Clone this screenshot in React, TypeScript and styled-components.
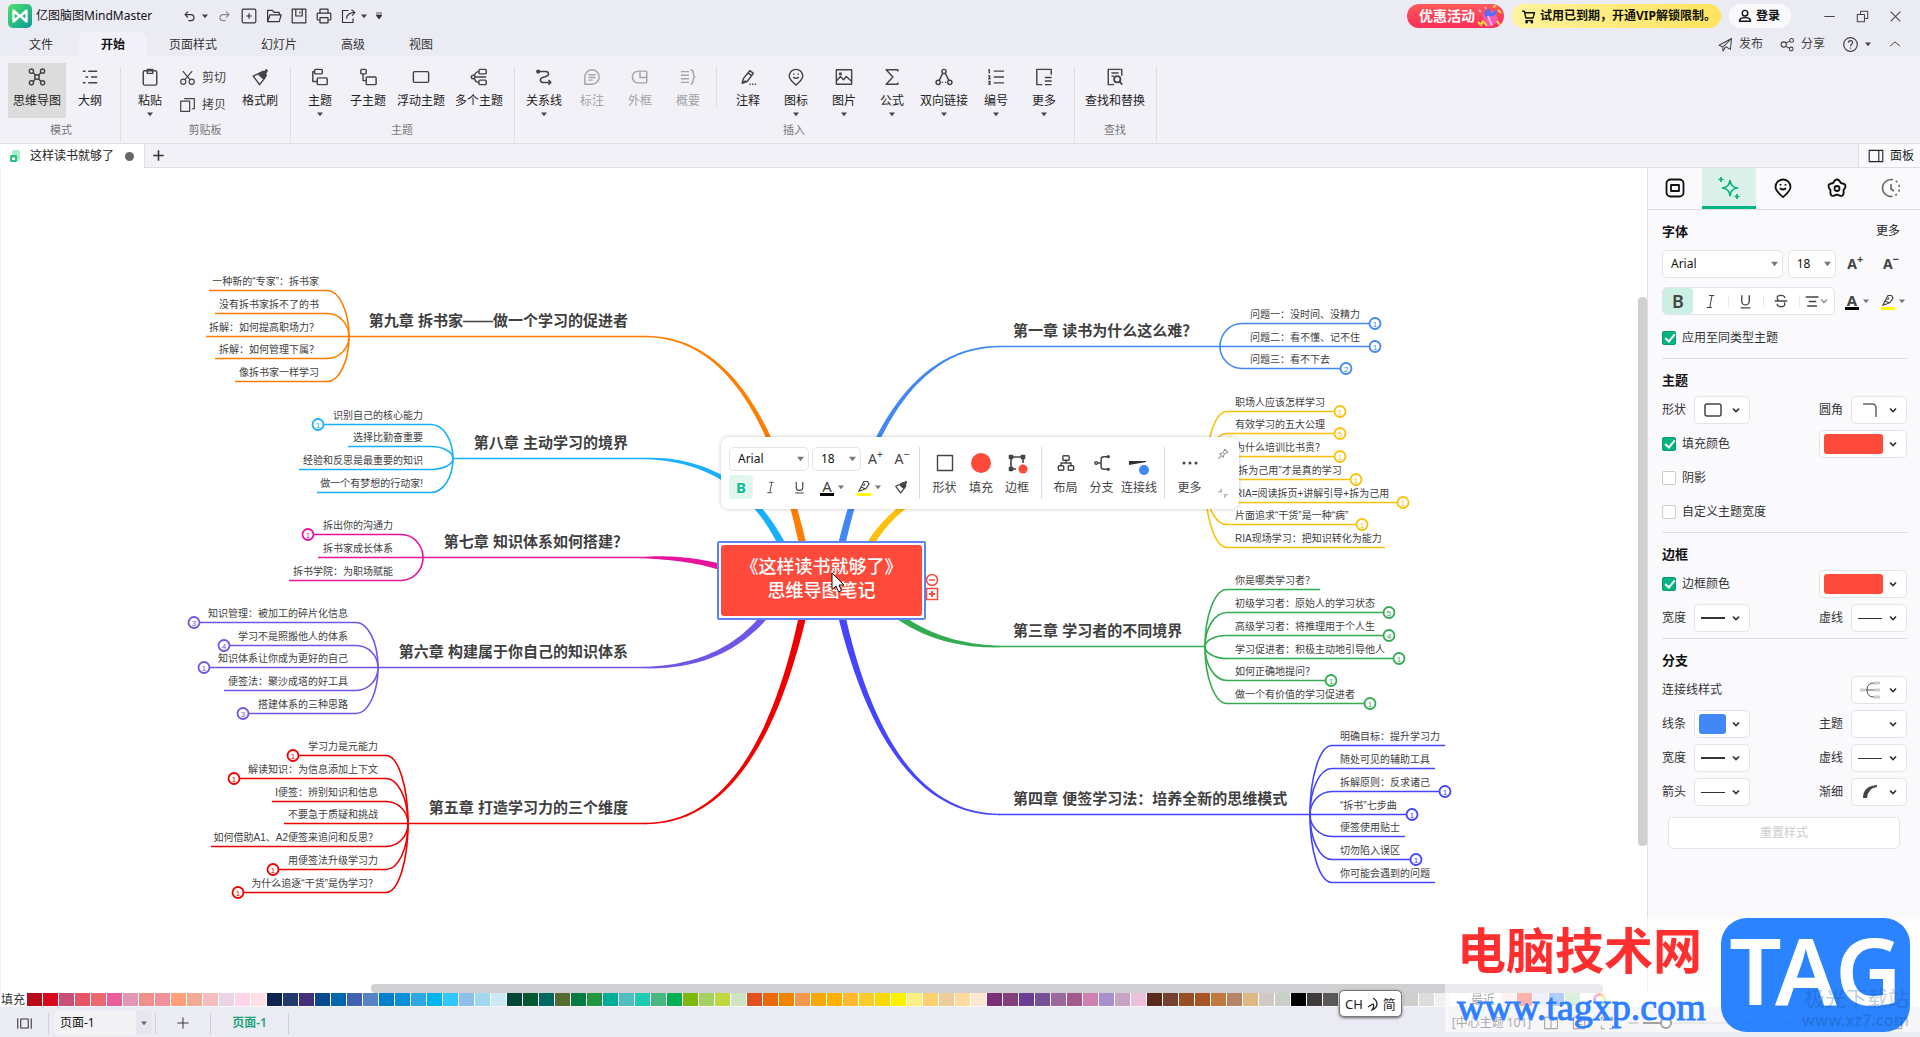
import React from 'react';
import styled, { createGlobalStyle, css } from 'styled-components';

const UI_FONT = `"Noto Sans", "Noto Sans CJK SC", sans-serif`;
const MAP_FONT = `"Liberation Sans", "Noto Sans CJK SC", sans-serif`;

const color = {
  chrome: '#ebebf4',
  ribbon: '#f2f1f7',
  line: '#dedee3',
  text: '#222',
  muted: '#777',
  green: '#00b582',
  red: '#fd4a3b',
  blue: '#4187f5',
};

const GlobalStyle = createGlobalStyle`
  * { box-sizing: border-box; }
  body { margin: 0; font: 12px/16px ${UI_FONT}; color: ${color.text}; overflow: hidden; }
  button, input, select { font: inherit; color: inherit; margin: 0; }
  button { background: none; border: 0; padding: 0; cursor: pointer; }
  svg { display: block; flex: none; }
  h2 { margin: 0; }
`;

/* ---------- icons ---------- */

const paths: Record<string, React.ReactNode> = {
  undo: <path d="M8 3.500 4 7.500l4 4M4.500 7.500H12a4 4 0 0 1 0 8H8.500" />,
  redo: <path d="m12 3.500 4 4-4 4M15.500 7.500H8a4 4 0 0 0 0 8h3.500" />,
  newDoc: <><rect x="1.500" y="1.500" width="17" height="17" rx="1.500" /><path d="M10 6.500v7M6.500 10h7" /></>,
  open: <path d="M2 17V3h6l2 2.500H16.500v3.500M2 17l3-8.500H19L16.500 17H2Z" />,
  save: <><path d="M1.500 1.500h17v17h-17z" /><path d="M6 1.500v8.500h8V1.500M11 4.500v2.500" /></>,
  print: <><path d="M5 6.500V1.500h10v5M5 15H2.500A1 1 0 0 1 1.500 14V7.500a1 1 0 0 1 1-1h15a1 1 0 0 1 1 1V14a1 1 0 0 1-1 1H15" /><path d="M5 12h10v6.500H5z" /></>,
  exportDoc: <path d="M10 2H2v16h14V12.500M7.500 13c0-5 3-8 10.500-8.500M14 1l4.500 3.500L15 9" />,
  mindmap: <><circle cx="10" cy="10" r="2.500" /><circle cx="3.800" cy="3.500" r="2.300" /><circle cx="16.200" cy="3.500" r="2.300" /><circle cx="3.800" cy="16.500" r="2.300" /><circle cx="16.200" cy="16.500" r="2.300" /><path d="m5.500 5 3 3M14.500 5l-3 3M5.500 15l3-3M14.500 15l-3-3" /></>,
  outline: <path d="M2 3.500h3M8 3.500h10M5 10h3M11 10h7M2 16.500h3M8 16.500h10" strokeWidth="1.700" />,
  paste: <><rect x="2.500" y="3" width="15" height="16" rx="1.500" /><path d="M7 1.500h6v4.500H7z" /></>,
  cut: <><circle cx="5" cy="15" r="3" /><circle cx="15" cy="15" r="3" /><path d="M4.500 2.500 13 12.500M15.500 2.500 7 12.500" /></>,
  copy: <><path d="M2 6h10.500v12H2z" /><path d="M6 3h12v12h-3" /></>,
  brush: <><path d="M2.500 9 11 5l4.500 6-6 7.500z" /><path d="m9 7.500 4-4 1.500 1.500 2.500-3 1 1-2 3.500 1 2-3.500 3z" fill="currentColor" /></>,
  topic: <><rect x="4" y="1.500" width="8.500" height="5" rx="1" /><rect x="7" y="11" width="11" height="7.500" rx="1" /><path d="M4 4H2v11h5" /></>,
  subTopic: <><rect x="2" y="1.500" width="6" height="5" rx="1" /><rect x="8" y="10" width="11" height="8.500" rx="1" /><path d="M4.500 6.500V14H8" /></>,
  floatTopic: <rect x="1.500" y="4" width="17" height="12" rx="1.500" />,
  multiTopic: <><circle cx="3.500" cy="10" r="2" /><rect x="10" y="1.500" width="8" height="5" rx="1" /><rect x="10" y="13.500" width="8" height="5" rx="1" /><path d="M10 4C7 4 5.500 6 5 8.500M10 16c-3 0-4.500-2-5-4.500M5.500 10H18" /></>,
  relation: <><circle cx="3.500" cy="4" r="1.500" fill="currentColor" /><path d="M5 4h7a3 3 0 0 1 3 3c0 4-9 2-9 6a3 3 0 0 0 3 3h8M15 13.500l2.500 2.500L15 18.500" strokeWidth="1.700" /></>,
  callout: <><path d="M2 18V10a8 8 0 1 1 8 8z" /><path d="M6 7.500h8M6 10.500h8M6 13.500h5" /></>,
  boundary: <><path d="M8 3.500h8.500a1 1 0 0 1 1 1v11a1 1 0 0 1-1 1H8a6.500 6.500 0 0 1 0-13Z" /><path d="M10 4v6.500h7.500" /></>,
  summary: <path d="M2 4h9M2 8h9M2 12h9M2 16h9M13 2c5 0 1.500 7 4.500 8-3 1-.500 8-4.500 8" />,
  note: <path d="M3.500 17 5 11.500 12 3l4 3-7 9zM10 5.500l4 3M3.500 17l4-3M11.500 18h1.500M14.500 18H16M17.500 18H19" />,
  marker: <><path d="M10 19C6 15.500 2.500 13 2.500 9a7.500 7.500 0 0 1 15 0c0 4-3.500 6.500-7.500 10Z" /><path d="M7.500 6v1.500M12.500 6v1.500M7 10c1.500 2 4.500 2 6 0" /></>,
  image: <><rect x="1.500" y="2" width="17" height="16" rx=".5" /><circle cx="6" cy="6.500" r="1" /><path d="m2 14 4-4.500 3.500 3.500 3-3.500 5.500 5" /></>,
  sigma: <path d="M16.500 4V2H3.500l7.500 8-7.500 8h13v-2" />,
  link: <><circle cx="10" cy="3.800" r="2.300" /><circle cx="3.500" cy="16" r="2.300" /><circle cx="16.500" cy="16" r="2.300" /><path d="M8.500 6 4.800 13.500M11.500 6l3.700 7.500M7.500 16h1.500M11 16h1.500" /></>,
  numbering: <path d="M7.500 3.500H19M7.500 10H19M7.500 16.500H19M1.500 2h1v4M1.500 9c2-1 2 0 .5 3h2M1.500 15h2l-1 1.500 1 1.500h-2" />,
  more: <path d="M18 7.500V1.500H2V18.500h6M11 10.500h7.500M11 14.500h7.500M11 18.500h7.500" />,
  find: <><path d="M9 18.500H2.500v-17h15v7M6 5.500h8M6 9h3" /><circle cx="12.500" cy="12.500" r="3.500" strokeWidth="2" /><path d="m15 15 3 3.500" strokeWidth="2" /></>,
  cart: <><path d="M1.500 3h3l2 9h9.500l2-7H5" /><path d="M6 15.500h10" /><circle cx="7.500" cy="17.500" r="1" /><circle cx="14.500" cy="17.500" r="1" /></>,
  user: <><circle cx="10" cy="6" r="4" /><path d="M2 17.500c0-7 16-7 16 0z" /></>,
  send: <path d="M18 2 1.500 11l5 2.500zM18 2l-1.500 14.500-6-3.500M18 2 6.500 13.500v5l4-5.500" />,
  share: <><circle cx="5" cy="10" r="3.500" /><circle cx="15.500" cy="4.500" r="2.500" /><circle cx="15" cy="16" r="2.500" /><path d="m8 8.500 5-3M7.500 12.500l5.500 2.500" /></>,
  help: <><circle cx="10" cy="10" r="8" /><path d="M7.500 8c0-3.500 5-3.500 5 0 0 2-2.500 1.500-2.500 4M10 13.500V15" /></>,
  up: <path d="m3 13 7-6 7 6" />,
  minimise: <path d="M2 10h16" />,
  restore: <><path d="M2 7h11v11H2z" /><path d="M7 7V2h11v11h-5" /></>,
  close: <path d="m2.500 2.500 15 15M17.500 2.500l-15 15" />,
  plus: <path d="M10 2v16M2 10h16" />,
  panel: <path d="M1.500 3h17v14h-17zM13.500 3v14" />,
  layoutTab: <><rect x="1.500" y="1.500" width="17" height="17" rx="4" /><rect x="6" y="7" width="8" height="6" /></>,
  sparkle: <><path d="M11 2.500c1 5 2.500 6.500 7.500 7.500-5 1-6.500 2.500-7.500 7.500-1-5-2.500-6.500-7.500-7.500 5-1 6.500-2.500 7.500-7.500Z" /><path d="M2-1v5M-.5 1.500h5M18 16v5M15.500 18.500h5" /></>,
  flower: <><path d="M10 1.500c2 0 3 1.800 3.800 3.500 2 .3 4.200.7 4.700 2.600.4 1.700-.8 3-2 4.400.2 2 .6 4.300-1 5.400-1.700 1.100-3.500.1-5.500-.9-2 1-3.800 2-5.500.9-1.600-1.100-1.200-3.400-1-5.400-1.200-1.400-2.400-2.700-2-4.400.5-1.900 2.700-2.300 4.700-2.600C7 3.300 8 1.500 10 1.500Z" /><circle cx="10" cy="10.500" r="2.500" /></>,
  history: <><path d="M10 1.500a8.500 8.500 0 0 0 0 17" /><path d="M10 1.500a8.500 8.500 0 0 1 0 17" strokeDasharray="2 3" /><path d="M10 6v5l3 2" /></>,
  italic: <path d="M8 2h7M5 18h7M12 2 9 18" />,
  underline: <path d="M5 1.500v8a5 5 0 0 0 10 0v-8M3.500 18.500h13" />,
  strike: <path d="M15.500 6c0-5.500-11-5.500-11-.5 0 1.500.5 2.500 2 3.500M4.500 14c0 5.500 11 5.500 11 .5 0-1-.5-2-1-2.500M1 10h18" />,
  align: <path d="M1 4h17M5 10h10M3 16h13" />,
  square: <rect x="2.500" y="2.500" width="15" height="15" />,
  frame: <><path d="M4 4h12v6M4 4v12h5" /><path d="M2.500 2.500h3v3h-3zM14.500 2.500h3v3h-3zM2.500 14.500h3v3h-3z" fill="currentColor" /><circle cx="16" cy="16" r="4.500" fill={color.red} stroke="none" /></>,
  org: <><rect x="6.500" y="2" width="7" height="5" rx="1" /><rect x="1.500" y="13" width="6" height="5" rx="1" /><rect x="12.500" y="13" width="6" height="5" rx="1" /><path d="M10 7v3M4.500 13v-3h11v3" /></>,
  branch: <><circle cx="3.500" cy="10" r="1.500" /><path d="M5 10h4M18 3h-6c-2 0-3 1-3 3v8c0 2 1 3 3 3h6" /><circle cx="17" cy="3" r="1" /><circle cx="17" cy="17" r="1" /></>,
  pin: <path d="m2 18 5-5M4 9l7 7M5.500 9.500 10 8l3-6 5 5-6 3-1.500 5" />,
  collapse: <path d="M2 8h5V3M13 18v-5h5" />,
  fitBox: <path d="M1 3v14M19 3v14M5 4h10v12H5z" />,
  book: <path d="M2 3h6l2 2 2-2h6v14H2zM10 5v12" />,
  grid: <path d="M3 3h14v14H3zM6 8h8M6 12h8" />,
  full: <path d="M7 3H3v4M13 3h4v4M7 17H3v-4M13 17h4v-4" />,
};

const Glyph = ({ name, size = 20, weight = 1.4 }: { name: string; size?: number; weight?: number }) => (
  <svg width={size} height={size} viewBox="0 0 20 20" fill="none" stroke="currentColor" strokeWidth={weight} strokeLinejoin="round" overflow="visible" aria-hidden="true">
    {paths[name]}
  </svg>
);

const Caret = ({ size = 6, fill = '#444' }: { size?: number; fill?: string }) => (
  <svg width={size} height={size} viewBox="0 0 8 8" aria-hidden="true"><path d="M0 2h8L4 7z" fill={fill} /></svg>
);

const Chevron = ({ tone = '#333' }: { tone?: string }) => (
  <svg width="8" height="8" viewBox="0 0 8 8" fill="none" stroke={tone} strokeWidth="1.700" aria-hidden="true"><path d="m1 2.500 3 3 3-3" /></svg>
);

/* ---------- window chrome ---------- */

const Shell = styled.div`
  position: relative;
  display: flex;
  flex-direction: column;
  height: 100vh;
  background: ${color.chrome};
`;

const TitleBar = styled.header`
  display: flex;
  align-items: center;
  justify-content: space-between;
  height: 32px;
  padding: 0 18px 0 8px;
`;

const Cluster = styled.div<{ $gap?: number }>`
  display: flex;
  align-items: center;
  gap: ${p => p.$gap ?? 0}px;
`;

const AppName = styled.span`
  margin: 0 26px 0 4px;
  width: 120px;
  color: #111;
  white-space: nowrap;
`;

const QuickButton = styled.button<{ $dim?: boolean }>`
  display: flex;
  align-items: center;
  gap: 5px;
  color: ${p => (p.$dim ? '#888' : '#333')};
`;

const Promo = styled.button`
  display: flex;
  align-items: center;
  width: 97px;
  height: 24px;
  padding-left: 12px;
  border-radius: 12px;
  background: linear-gradient(180deg, #ff5a5a, #fb2d57);
  color: #fff;
  font-size: 14px;
  font-weight: 700;
`;

const VipPill = styled.button`
  display: flex;
  align-items: center;
  gap: 4px;
  height: 24px;
  width: 209px;
  padding-left: 9px;
  border-radius: 12px;
  background: linear-gradient(90deg, #fff39c, #ffe35e);
  color: #111;
  font-weight: 700;
  white-space: nowrap;
`;

const LoginPill = styled(VipPill)`
  width: 62px;
  background: #fafafd;
`;

const WindowButtons = styled(Cluster)`
  margin-left: 24px;
  color: #444;
`;

const TabRow = styled.nav`
  display: flex;
  justify-content: space-between;
  height: 24px;
  padding: 0 18px 0 7px;
`;

const RibbonTab = styled.button<{ $active?: boolean }>`
  height: 24px;
  padding: 1px 22px 0;
  color: #333;
  &:first-child { margin-right: 4px; }
  ${p => p.$active && css`
    background: ${color.ribbon};
    border-radius: 6px 6px 0 0;
    color: #111;
    font-weight: 700;
  `}
`;

const LinkButton = styled.button`
  display: flex;
  align-items: center;
  gap: 6px;
  color: #444;
`;

/* ---------- ribbon ---------- */

const Ribbon = styled.section`
  display: flex;
  height: 88px;
  background: ${color.ribbon};
  border-bottom: 1px solid ${color.line};
`;

const Group = styled.div<{ $first?: boolean }>`
  position: relative;
  display: flex;
  flex-direction: column;
  padding: 7px 7px 0 ${p => (p.$first ? 8 : 5)}px;
  &::after {
    content: '';
    position: absolute;
    right: 0;
    top: 11px;
    bottom: 1px;
    width: 1px;
    background: ${color.line};
  }
`;

const Tools = styled.div`
  display: flex;
  height: 55px;
`;

const GroupLabel = styled.div`
  margin-top: 4px;
  font-size: 11px;
  text-align: center;
  color: ${color.muted};
`;

const Tool = styled.button<{ $w: number; $active?: boolean; $off?: boolean }>`
  display: flex;
  flex-direction: column;
  align-items: center;
  width: ${p => p.$w}px;
  padding-top: 5px;
  color: ${p => (p.$off ? '#a3a3a8' : '#444')};
  background: ${p => (p.$active ? '#dcdcdd' : 'none')};
  white-space: nowrap;
  span { margin: 7px 0 2px; color: ${p => (p.$off ? '#a3a3a8' : '#222')}; }
`;

const SmallTools = styled.div`
  display: flex;
  flex-direction: column;
  width: 62px;
  padding: 6px 0 0 5px;
  gap: 10px;
`;

const SmallTool = styled.button`
  display: flex;
  align-items: center;
  gap: 6px;
  height: 17px;
  color: #444;
`;

const ToolRule = styled.i`
  width: 1px;
  height: 42px;
  margin: 3px 7px 0 4px;
  background: ${color.line};
`;

type ToolSpec = { icon: string; label: string; w?: number; menu?: boolean; off?: boolean; active?: boolean };

const ToolButton = ({ icon, label, w = 48, menu, off, active }: ToolSpec) => (
  <Tool $w={w} $off={off} $active={active} disabled={off}>
    <Glyph name={icon} size={18} weight={1.6} />
    <span>{label}</span>
    {menu && <Caret size={6} fill="#445" />}
  </Tool>
);

const topicTools: ToolSpec[] = [
  { icon: 'topic', label: '主题', menu: true },
  { icon: 'subTopic', label: '子主题' },
  { icon: 'floatTopic', label: '浮动主题', w: 58 },
  { icon: 'multiTopic', label: '多个主题', w: 58 },
];
const relationTools: ToolSpec[] = [
  { icon: 'relation', label: '关系线', menu: true },
  { icon: 'callout', label: '标注', off: true },
  { icon: 'boundary', label: '外框', off: true },
  { icon: 'summary', label: '概要', off: true },
];
const insertTools: ToolSpec[] = [
  { icon: 'note', label: '注释' },
  { icon: 'marker', label: '图标', menu: true },
  { icon: 'image', label: '图片', menu: true },
  { icon: 'sigma', label: '公式', menu: true },
  { icon: 'link', label: '双向链接', w: 56, menu: true },
  { icon: 'numbering', label: '编号', menu: true },
  { icon: 'more', label: '更多', menu: true },
];

/* ---------- document tabs ---------- */

const DocBar = styled.div`
  display: flex;
  height: 24px;
  background: ${color.ribbon};
  border-bottom: 1px solid ${color.line};
`;

const DocTab = styled.div`
  display: flex;
  align-items: center;
  width: 145px;
  height: 24px;
  padding-left: 9px;
  background: #fff;
  border-right: 1px solid ${color.line};
  span { width: 84px; margin: 0 11px 0 9px; }
`;

const Dot = styled.i`
  width: 9px;
  height: 9px;
  border-radius: 50%;
  background: #666;
`;

const AddDoc = styled.button`
  display: grid;
  place-items: center;
  width: 26px;
  color: #333;
`;

const PanelToggle = styled.button`
  display: flex;
  align-items: center;
  gap: 6px;
  width: 62px;
  margin-left: auto;
  padding-left: 9px;
  background: #fafafd;
  border-left: 1px solid ${color.line};
`;

/* ---------- canvas ---------- */

const Main = styled.main`
  display: flex;
  flex: 1;
  min-height: 0;
`;

const Canvas = styled.section`
  position: relative;
  flex: 1;
  overflow: hidden;
  background: #fff;
  border-left: 1px solid #f0f0f5;
`;

const MAP_W = 1646;
const MAP_H = 825;
const MAP_TOP = 168;

const MapLayer = styled.div`
  position: absolute;
  left: -1px;
  top: 0;
  width: ${MAP_W}px;
  height: ${MAP_H}px;
  font-family: ${MAP_FONT};
`;

const Lines = styled.svg`
  position: absolute;
  inset: 0;
`;

const NodeText = styled.div<{ $side: Side; $x: number; $y: number; $title?: boolean }>`
  position: absolute;
  top: ${p => p.$y - MAP_TOP}px;
  ${p => (p.$side === 'left' ? `right: ${MAP_W - p.$x}px` : `left: ${p.$x}px`)};
  font-size: ${p => (p.$title ? 15 : 10)}px;
  line-height: ${p => (p.$title ? 20 : 14)}px;
  font-weight: ${p => (p.$title ? 700 : 400)};
  color: #404040;
  white-space: nowrap;
`;

type Side = 'left' | 'right';
type Leaf = [text: string, y: number, end: number, badge?: number];
type Branch = {
  side: Side;
  tone: string;
  title?: string;
  y: number;
  spine: number;
  control: number;
  root: [number, number];
  power: number;
  leaves: Leaf[];
};

const branches: Branch[] = [
  { side: 'left', tone: '#ff7d00', title: '第九章 拆书家——做一个学习的促进者', y: 336, spine: 349, control: 765, root: [810, 580], power: 1.5,
    leaves: [['一种新的“专家”：拆书家', 290, 209], ['没有拆书家拆不了的书', 313, 215], ['拆解：如何提高职场力？', 336, 206], ['拆解：如何管理下属？', 358, 215], ['像拆书家一样学习', 381, 235]] },
  { side: 'left', tone: '#1ab0ff', title: '第八章 主动学习的境界', y: 458, spine: 453, control: 755, root: [797, 580], power: 0.8,
    leaves: [['识别自己的核心能力', 424, 318, 1], ['选择比勤奋重要', 446, 348], ['经验和反思是最重要的知识', 469, 299], ['做一个有梦想的行动家!', 492, 317]] },
  { side: 'left', tone: '#e8139b', title: '第七章 知识体系如何搭建？', y: 557, spine: 423, control: 722, root: [765, 588], power: 0.6,
    leaves: [['拆出你的沟通力', 534, 308, 1], ['拆书家成长体系', 557, 318], ['拆书学院：为职场赋能', 580, 289]] },
  { side: 'left', tone: '#6e57e8', title: '第六章 构建属于你自己的知识体系', y: 667, spine: 378, control: 745, root: [788, 580], power: 0.8,
    leaves: [['知识管理：被加工的碎片化信息', 622, 194, 3], ['学习不是照搬他人的体系', 645, 224, 4], ['知识体系让你成为更好的自己', 667, 204, 1], ['便签法：聚沙成塔的好工具', 690, 224], ['搭建体系的三种思路', 713, 243, 3]] },
  { side: 'left', tone: '#f00000', title: '第五章 打造学习力的三个维度', y: 823, spine: 408, control: 765, root: [810, 580], power: 1.5,
    leaves: [['学习力是元能力', 755, 293, 1], ['解读知识：为信息添加上下文', 778, 234, 1], ['I便签：辨别知识和信息', 801, 272], ['不要急于质疑和挑战', 823, 284], ['如何借助A1、A2便签来追问和反思？', 846, 211], ['用便签法升级学习力', 869, 273, 1], ['为什么追逐“干货”是伪学习？', 892, 238, 1]] },
  { side: 'right', tone: '#4187f5', title: '第一章 读书为什么这么难？', y: 346, spine: 1220, control: 879, root: [834, 580], power: 1.5,
    leaves: [['问题一：没时间、没精力', 323, 1375, 1], ['问题二：看不懂、记不住', 346, 1375, 1], ['问题三：看不下去', 368, 1346, 2]] },
  { side: 'right', tone: '#fdc00a', y: 479, spine: 1205, control: 887, root: [854, 580], power: 0.8,
    leaves: [['职场人应该怎样学习', 411, 1340, 1], ['有效学习的五大公理', 433, 1340, 5], ['为什么培训比书贵？', 456, 1340, 1], ['“拆为己用”才是真的学习', 479, 1356, 1], ['RIA=阅读拆页+讲解引导+拆为己用', 502, 1403, 1], ['片面追求“干货”是一种“病”', 524, 1362, 1], ['RIA现场学习：把知识转化为能力', 547, 1385]] },
  { side: 'right', tone: '#33ab50', title: '第三章 学习者的不同境界', y: 646, spine: 1205, control: 912, root: [862, 580], power: 0.8,
    leaves: [['你是哪类学习者？', 589, 1320], ['初级学习者：原始人的学习状态', 612, 1389, 5], ['高级学习者：将推理用于个人生', 635, 1389, 4], ['学习促进者：积极主动地引导他人', 658, 1399, 1], ['如何正确地提问？', 680, 1331, 1], ['做一个有价值的学习促进者', 703, 1370, 1]] },
  { side: 'right', tone: '#4545ff', title: '第四章 便签学习法：培养全新的思维模式', y: 814, spine: 1310, control: 879, root: [834, 580], power: 1.5,
    leaves: [['明确目标：提升学习力', 745, 1445], ['随处可见的辅助工具', 768, 1435], ['拆解原则：反求诸己', 791, 1445, 1], ['“拆书”七步曲', 814, 1412, 1], ['便签使用贴士', 836, 1405], ['切勿陷入误区', 859, 1416, 1], ['你可能会遇到的问题', 882, 1435]] },
];

/* Outline of a branch that thickens from its topic line towards the root. */
function taper(b: Branch): string {
  const sx = b.side === 'left' ? 645 : 1000;
  const sy = b.y + 0.5;
  const [rx, ry] = b.root;
  const near: string[] = [];
  const far: string[] = [];
  for (let i = 0; i <= 32; i++) {
    const t = i / 32;
    const x = sx * (1 - t) ** 2 + 2 * t * (1 - t) * b.control + rx * t * t;
    const y = sy + (ry - sy) * t * t;
    const dx = 2 * (1 - t) * (b.control - sx) + 2 * t * (rx - b.control);
    const dy = 2 * t * (ry - sy);
    const len = Math.hypot(dx, dy);
    const half = (1.5 + 6.5 * t ** b.power) / 2;
    near.push(`${(x - (dy / len) * half).toFixed(1)} ${(y + (dx / len) * half).toFixed(1)}`);
    far.unshift(`${(x + (dy / len) * half).toFixed(1)} ${(y - (dx / len) * half).toFixed(1)}`);
  }
  return `M${near.concat(far).join('L')}Z`;
}

const BranchLines = ({ b }: { b: Branch }) => {
  const dir = b.side === 'left' ? -1 : 1;
  const joint = b.spine + dir * 22;
  const y = b.y + 0.5;
  return (
    <g stroke={b.tone} fill="none" strokeWidth="1.600">
      <path d={taper(b)} fill={b.tone} stroke="none" />
      <path d={`M${b.spine} ${y}H${b.side === 'left' ? 646 : 999}`} />
      {b.leaves.map(([text, ly, end, badge]) => {
        const lineY = ly + 0.5;
        const up = lineY < y;
        const sweep = (dir > 0) === up ? 1 : 0;
        const bend = ly === b.y ? `M${b.spine} ${y}H${joint}` : `M${b.spine} ${y}A22 ${Math.abs(lineY - y)} 0 0 ${sweep} ${joint} ${lineY}`;
        return (
          <g key={text}>
            <path d={`${bend}H${badge ? end - dir * 6 : end}`} />
            {badge && (
              <>
                <circle cx={end} cy={lineY} r="5.500" fill="#fff" strokeWidth="1.800" />
                <text x={end} y={lineY + 3} fontSize="8" textAnchor="middle" fill={b.tone} stroke="none">{badge}</text>
              </>
            )}
          </g>
        );
      })}
    </g>
  );
};

const RootTopic = styled.div`
  position: absolute;
  left: 717px;
  top: 373px;
  width: 209px;
  height: 79px;
  padding: 2px;
  border: 2px solid #5f82f5;
  border-radius: 2px;
  background: #fff;
  div {
    display: flex;
    flex-direction: column;
    justify-content: center;
    height: 100%;
    padding-bottom: 7px;
    border-radius: 3px;
    background: ${color.red};
    color: #fff;
    font: 500 18px/24px "Noto Sans CJK SC", sans-serif;
    text-align: center;
  }
`;

const RootMarks = styled.svg`
  position: absolute;
  left: 925px;
  top: 405px;
`;

const Cursor = styled.svg`
  position: absolute;
  left: 831px;
  top: 404px;
`;

const ScrollThumb = styled.i<{ $vertical?: boolean }>`
  position: absolute;
  border-radius: 4px;
  background: #d0d0d3;
  ${p => p.$vertical
    ? 'right: 0; top: 129px; width: 9px; height: 549px;'
    : 'left: 370px; right: 44px; bottom: 0; height: 9px;'}
`;

/* ---------- floating toolbar ---------- */

const FloatBar = styled.div`
  position: absolute;
  left: 721px;
  top: 269px;
  display: flex;
  align-items: center;
  width: 518px;
  height: 72px;
  padding-left: 8px;
  background: #fff;
  border-radius: 8px;
  box-shadow: 0 0 4px rgba(0, 0, 0, 0.22);
  font-family: ${UI_FONT};
`;

const FormatBlock = styled.div`
  display: flex;
  flex-direction: column;
  gap: 4px;
  width: 190px;
`;

const Field = styled.label<{ $w: number; $h: number }>`
  position: relative;
  display: block;
  width: ${p => p.$w}px;
  height: ${p => p.$h}px;
  select {
    appearance: none;
    width: 100%;
    height: 100%;
    padding: 0 8px;
    border: 1px solid #e4e4e8;
    border-radius: 5px;
    background: #fff;
    color: #111;
    line-height: 16px;
  }
  svg { position: absolute; right: 5px; top: 50%; margin-top: -4px; }
`;

const Picker = ({ name, value, w, h }: { name: string; value: string; w: number; h: number }) => (
  <Field $w={w} $h={h}>
    <select aria-label={name} defaultValue={value}><option>{value}</option></select>
    <Caret size={7} fill="#777" />
  </Field>
);

const FormatButton = styled.button<{ $w: number; $on?: boolean; $h?: number }>`
  display: flex;
  align-items: center;
  justify-content: center;
  gap: 4px;
  width: ${p => p.$w}px;
  height: ${p => p.$h ?? 24}px;
  border-radius: 4px;
  color: ${p => (p.$on ? '#1b9' : '#444')};
  background: ${p => (p.$on ? '#e2f6f0' : 'none')};
  font-size: 15px;
`;

const Raised = styled.span<{ $bold?: boolean }>`
  display: flex;
  font: ${p => (p.$bold ? 700 : 400)} 14px/18px ${UI_FONT};
  sup { font-size: 11px; line-height: 8px; }
`;

const Marked = styled.span<{ $mark: string; $bold?: boolean }>`
  display: grid;
  place-items: center;
  width: 14px;
  height: 18px;
  border-bottom: 3px solid ${p => p.$mark};
  font: ${p => (p.$bold ? 700 : 400)} 15px/14px ${UI_FONT};
`;

const HighlightPen = () => (
  <svg width="12" height="12" viewBox="0 0 12 12" fill="none" stroke="#444" strokeWidth="1.200" aria-hidden="true">
    <path d="M1 11l2-4 3-5.500h3.500L11 4 8 8.500 4.500 10zM3 7l4.500 2M5.500 6 7 3.500" />
  </svg>
);

const BarRule = styled.i`
  width: 1px;
  height: 52px;
  background: #dcdce0;
`;

const BarTool = styled.button<{ $w: number }>`
  display: flex;
  flex-direction: column;
  align-items: center;
  gap: 7px;
  width: ${p => p.$w}px;
  padding-top: 2px;
  color: #444;
  white-space: nowrap;
`;

const IconSlot = styled.span`
  display: grid;
  place-items: center;
  height: 20px;
`;

const BarEdge = styled.div`
  display: flex;
  flex-direction: column;
  gap: 27px;
  margin-left: auto;
  padding-right: 10px;
  color: #999;
`;

const FloatingToolbar = () => (
  <FloatBar>
    <FormatBlock>
      <Cluster $gap={3}>
        <Picker name="字体" value="Arial" w={80} h={24} />
        <Picker name="字号" value="18" w={49} h={24} />
        <FormatButton $w={23}><Raised>A<sup>+</sup></Raised></FormatButton>
        <FormatButton $w={24}><Raised>A<sup>−</sup></Raised></FormatButton>
      </Cluster>
      <Cluster $gap={5}>
        <FormatButton $w={24} $on><b>B</b></FormatButton>
        <FormatButton $w={24}><Glyph name="italic" size={13} /></FormatButton>
        <FormatButton $w={24}><Glyph name="underline" size={13} weight={1.8} /></FormatButton>
        <FormatButton $w={32}><Marked $mark="#000">A</Marked><Caret fill="#777" /></FormatButton>
        <FormatButton $w={31}><Marked $mark="#ff0"><HighlightPen /></Marked><Caret fill="#777" /></FormatButton>
        <FormatButton $w={24}><Glyph name="brush" size={14} weight={1.8} /></FormatButton>
      </Cluster>
    </FormatBlock>
    <BarRule />
    <Cluster>
      <BarTool $w={49}><IconSlot><Glyph name="square" size={20} /></IconSlot>形状</BarTool>
      <BarTool $w={24}><IconSlot><svg width="20" height="20"><circle cx="10" cy="10" r="10" fill={color.red} /></svg></IconSlot>填充</BarTool>
      <BarTool $w={48}><IconSlot><Glyph name="frame" size={20} weight={1.6} /></IconSlot>边框</BarTool>
      <BarRule />
      <BarTool $w={47}><IconSlot><Glyph name="org" size={18} weight={1.6} /></IconSlot>布局</BarTool>
      <BarTool $w={25}><IconSlot><Glyph name="branch" size={18} weight={1.6} /></IconSlot>分支</BarTool>
      <BarTool $w={50}>
        <IconSlot><svg width="20" height="20" overflow="visible"><path d="M0 8h17v1L0 12z" fill="#333" /><circle cx="15" cy="17" r="5" fill={color.blue} /></svg></IconSlot>
        连接线
      </BarTool>
      <BarRule />
      <BarTool $w={49}><IconSlot><svg width="16" height="4"><g fill="#444"><circle cx="2" cy="2" r="1.500" /><circle cx="8" cy="2" r="1.500" /><circle cx="14" cy="2" r="1.500" /></g></svg></IconSlot>更多</BarTool>
    </Cluster>
    <BarEdge>
      <button aria-label="固定"><Glyph name="pin" size={12} weight={1.8} /></button>
      <button aria-label="收起"><Glyph name="collapse" size={12} weight={1.8} /></button>
    </BarEdge>
  </FloatBar>
);

/* ---------- side panel ---------- */

const Panel = styled.aside`
  width: 273px;
  background: #fafafd;
  border-left: 1px solid ${color.line};
`;

const PanelTabs = styled.div`
  display: grid;
  grid-template-columns: repeat(5, 54px);
  height: 42px;
  border-bottom: 1px solid ${color.line};
`;

const PanelTab = styled.button<{ $active?: boolean; $dim?: boolean }>`
  display: grid;
  place-items: center;
  padding-top: 2px;
  border-bottom: 3px solid ${p => (p.$active ? color.green : 'transparent')};
  background: ${p => (p.$active ? '#dcf0ea' : 'none')};
  color: ${p => (p.$active ? color.green : p.$dim ? '#666' : '#111')};
`;

const Section = styled.section<{ $gap?: number }>`
  display: flex;
  flex-direction: column;
  gap: ${p => p.$gap ?? 6}px;
  margin: 0 13px 0 14px;
  padding: 10px 0 6px;
  & + & { border-top: 1px solid ${color.line}; }
`;

const Heading = styled.div`
  display: flex;
  justify-content: space-between;
  align-items: center;
  height: 21px;
  padding-right: 7px;
  h2 { font-size: 13px; line-height: 20px; font-weight: 700; color: #111; }
`;

const Row = styled.div`
  display: flex;
  align-items: center;
  justify-content: space-between;
  height: 28px;
  color: #333;
`;

const FormatGroup = styled.div`
  display: flex;
  align-items: center;
  width: 173px;
  height: 28px;
  border: 1px solid #e4e4e8;
  border-radius: 5px;
  background: #fff;
`;

const BoldToggle = styled(FormatButton)`
  background: #ccefe5;
  color: #444;
  font-size: 18px;
  font-weight: 600;
`;

const GroupButton = styled(FormatButton)`
  flex: 1;
  gap: 0;
  & + & { border-left: 1px solid #e8e8ec; border-radius: 0; height: 12px; }
`;

const Check = styled.label`
  display: flex;
  align-items: center;
  gap: 6px;
  input {
    appearance: none;
    width: 14px;
    height: 14px;
    border: 1px solid #ccc;
    border-radius: 2px;
    background: #fff;
  }
  input:checked {
    border-color: #0a9a72;
    background: ${color.green};
  }
  input:checked::after {
    content: '';
    display: block;
    width: 4px;
    height: 8px;
    margin: 0 0 0 4px;
    border: solid #fff;
    border-width: 0 2px 2px 0;
    transform: rotate(40deg);
  }
`;

const Drop = styled.button<{ $w?: number }>`
  display: flex;
  align-items: center;
  justify-content: space-between;
  width: ${p => p.$w ?? 56}px;
  height: 28px;
  padding: 0 9px 0 4px;
  border: 1px solid #e4e4e8;
  border-radius: 5px;
  background: #fff;
`;

const Preview = styled.span`
  display: grid;
  place-items: center;
  flex: 1;
  height: 20px;
  margin-right: 6px;
`;

const Swatch = styled(Preview)<{ $tone: string }>`
  border-radius: 3px;
  background: ${p => p.$tone};
`;

const Reset = styled.button`
  display: block;
  width: 232px;
  height: 32px;
  margin: 5px 0 0 20px;
  border: 1px solid #e4e4e8;
  border-radius: 5px;
  background: #fff;
  color: #ccc;
`;

const Stroke = ({ weight }: { weight: number }) => (
  <svg width="24" height="4" aria-hidden="true"><path d={weight === 1 ? 'M0 2.5h24' : 'M0 2h24'} stroke="#333" strokeWidth={weight} /></svg>
);

const Labelled = ({ label, children }: { label: string; children: React.ReactNode }) => (
  <Cluster $gap={8}>
    <span>{label}</span>
    <Drop aria-label={label}><Preview>{children}</Preview><Chevron /></Drop>
  </Cluster>
);

const CheckBox = ({ label, on }: { label: string; on?: boolean }) => (
  <Check><input type="checkbox" defaultChecked={on} />{label}</Check>
);

const SidePanel = () => (
  <Panel>
    <PanelTabs>
      <PanelTab aria-label="布局"><Glyph name="layoutTab" weight={1.8} /></PanelTab>
      <PanelTab $active aria-label="样式"><Glyph name="sparkle" weight={1.7} /></PanelTab>
      <PanelTab aria-label="图标"><Glyph name="marker" weight={1.8} /></PanelTab>
      <PanelTab aria-label="剪贴画"><Glyph name="flower" weight={1.8} /></PanelTab>
      <PanelTab $dim aria-label="历史"><Glyph name="history" weight={1.6} /></PanelTab>
    </PanelTabs>
    <Section $gap={9}>
      <Heading><h2>字体</h2><button>更多</button></Heading>
      <Row>
        <Picker name="字体" value="Arial" w={121} h={28} />
        <Picker name="字号" value="18" w={48} h={28} />
        <FormatButton $w={30}><Raised $bold>A<sup>+</sup></Raised></FormatButton>
        <FormatButton $w={32}><Raised $bold>A<sup>−</sup></Raised></FormatButton>
      </Row>
      <Row>
        <FormatGroup>
          <BoldToggle $w={30} $h={26}>B</BoldToggle>
          <GroupButton $w={35}><Glyph name="italic" size={15} /></GroupButton>
          <GroupButton $w={35}><Glyph name="underline" size={15} weight={1.8} /></GroupButton>
          <GroupButton $w={35}><Glyph name="strike" size={14} weight={1.8} /></GroupButton>
          <GroupButton $w={35}><Glyph name="align" size={15} weight={1.8} /><Chevron tone="#999" /></GroupButton>
        </FormatGroup>
        <FormatButton $w={28}><Marked $mark="#000" $bold>A</Marked><Caret fill="#777" /></FormatButton>
        <FormatButton $w={28}><Marked $mark="#ff0"><HighlightPen /></Marked><Caret fill="#777" /></FormatButton>
      </Row>
      <Row><CheckBox label="应用至同类型主题" on /></Row>
    </Section>
    <Section>
      <Heading><h2>主题</h2></Heading>
      <Row>
        <Labelled label="形状"><svg width="18" height="14"><rect x="1" y="1" width="16" height="12" rx="2" fill="none" stroke="#444" strokeWidth="1.500" /></svg></Labelled>
        <Labelled label="圆角"><svg width="14" height="14"><path d="M0 1h9q4 0 4 4v9" fill="none" stroke="#666" strokeWidth="1.500" /></svg></Labelled>
      </Row>
      <Row><CheckBox label="填充颜色" on /><Drop $w={88} aria-label="填充颜色"><Swatch $tone={color.red} /><Chevron /></Drop></Row>
      <Row><CheckBox label="阴影" /></Row>
      <Row><CheckBox label="自定义主题宽度" /></Row>
    </Section>
    <Section>
      <Heading><h2>边框</h2></Heading>
      <Row><CheckBox label="边框颜色" on /><Drop $w={88} aria-label="边框颜色"><Swatch $tone={color.red} /><Chevron /></Drop></Row>
      <Row><Labelled label="宽度"><Stroke weight={2} /></Labelled><Labelled label="虚线"><Stroke weight={1} /></Labelled></Row>
    </Section>
    <Section>
      <Heading><h2>分支</h2></Heading>
      <Row>
        <span>连接线样式</span>
        <Drop aria-label="连接线样式">
          <Preview>
            <svg width="20" height="18" fill="none" aria-hidden="true">
              <path d="M0 9h6M14 2h6M14 9h6M14 16h6" stroke="#ccc" strokeWidth="3" />
              <path d="M14 2Q7 2 7 9t7 7M6 9h8" stroke="#555" />
            </svg>
          </Preview>
          <Chevron />
        </Drop>
      </Row>
      <Row>
        <Cluster $gap={8}><span>线条</span><Drop aria-label="线条"><Swatch $tone={color.blue} /><Chevron /></Drop></Cluster>
        <Labelled label="主题">{null}</Labelled>
      </Row>
      <Row><Labelled label="宽度"><Stroke weight={2} /></Labelled><Labelled label="虚线"><Stroke weight={1} /></Labelled></Row>
      <Row>
        <Labelled label="箭头"><Stroke weight={1} /></Labelled>
        <Labelled label="渐细"><svg width="14" height="14"><path d="M0 13Q0 1 14 0v2Q5 3 4 13z" fill="#444" /></svg></Labelled>
      </Row>
    </Section>
    <Reset>重置样式</Reset>
  </Panel>
);

/* ---------- palette and status ---------- */

const swatches = (
  'b80a18 d8091c c75078 e85466 ec6a6e e85f9c e098b4 ef908b f1909a ffa07a f1aa94 f5bebe ead4e6 ffd4e6 ffe0e6 ' +
  '0f2350 24396e 432f7a 084a8c 0068ab 4062b0 5484c4 0080cc 0a90d8 2ea8e0 00b4ee 30c8fa 8cc0e8 a0d8f0 cce8f4 ' +
  '034736 035a30 006860 566b30 027c40 20963e 00ac9a 50bec0 1cccb2 48b880 00b054 7eb80e a4d064 c0d840 cce4c4 ' +
  'e05020 ec6808 f08400 f49850 f4a80a ffb000 ffb830 f8cc2c fcd808 fff000 fcf084 fcd070 eccc9c ffdaa0 fce8d0 ' +
  '7c2e78 84407e 6a3c94 785098 9c68a0 a4588c d080b0 a890cc c8a4c4 ecc0dc 5c2a1c 78402f 984f28 a85424 c07840 ' +
  'b88468 deb884 d4c8c4 c8d0c8 000000 403a3a 5a5858 707070 888888 a0a0a0 b4b4b4 cccfcc dddddd f0f0f0'
).split(' ');

const Palette = styled.div`
  display: flex;
  align-items: center;
  height: 14px;
  padding-left: 1px;
  background: #fff;
  border-bottom: 1px solid #f7f7fb;
  color: #333;
  span { width: 26px; line-height: 14px; }
`;

const Chip = styled.button<{ $tone: string }>`
  width: 15px;
  height: 13px;
  margin-right: 1px;
  background: ${p => p.$tone};
`;

const Recent = styled.span`
  margin: 0 4px 0 20px;
`;

const Wheel = styled.i`
  width: 13px;
  height: 13px;
  margin-left: 12px;
  border: 3px solid transparent;
  border-radius: 50%;
  background: linear-gradient(#fff, #fff) padding-box, conic-gradient(#f44, #fd3, #4d4, #3cf, #54f, #f4c, #f44) border-box;
`;

const StatusBar = styled.footer`
  display: flex;
  align-items: center;
  justify-content: space-between;
  height: 30px;
  padding: 2px 16px 0 0;
  color: #333;
`;

const StatusRule = styled.i`
  width: 1px;
  height: 21px;
  background: #cfcfd4;
`;

const PageField = styled.label`
  position: relative;
  margin: 0 3px 0 5px;
  select {
    appearance: none;
    width: 98px;
    height: 24px;
    padding: 0 6px;
    border: 0;
    border-right: 16px solid #e6e6ef;
    border-radius: 5px;
    background: #f2f2f5;
    color: #111;
  }
  svg { position: absolute; right: 5px; top: 9px; }
`;

const StatusButton = styled.button<{ $w: number; $current?: boolean }>`
  display: grid;
  place-items: center;
  width: ${p => p.$w}px;
  height: 24px;
  color: ${p => (p.$current ? '#1fa578' : '#333')};
  font-weight: ${p => (p.$current ? 600 : 400)};
`;

const ViewButtons = styled(Cluster)`
  margin-left: 33px;
`;

const ZoomSlider = styled.input`
  appearance: none;
  width: 96px;
  height: 2px;
  background: linear-gradient(90deg, #222 24px, #ccc 24px);
  &::-webkit-slider-thumb {
    appearance: none;
    width: 12px;
    height: 12px;
    border: 2px solid #222;
    border-radius: 50%;
    background: #fff;
  }
`;

/* ---------- overlays ---------- */

const ImeBadge = styled.div`
  position: absolute;
  left: 1339px;
  bottom: 20px;
  display: flex;
  align-items: center;
  gap: 4px;
  height: 27px;
  padding: 0 5px;
  border: 1px solid #777;
  border-radius: 5px;
  background: #fff;
  box-shadow: 0 1px 3px rgba(0, 0, 0, 0.6);
  font-size: 13px;
`;

const Watermark = styled.div`
  position: absolute;
  right: 0;
  bottom: 5px;
  display: flex;
  width: 475px;
  height: 114px;
  padding-left: 12px;
  background: rgba(255, 255, 255, 0.58);
  pointer-events: none;
`;

const WatermarkText = styled.div`
  width: 264px;
  color: #ff2f2f;
  font: 700 49px/60px "Noto Sans CJK SC", sans-serif;
  white-space: nowrap;
  p {
    margin: 0;
    padding-top: 4px;
    color: #2f80ff;
    font: 400 38px/50px "Liberation Serif", serif;
    -webkit-text-stroke: 1px #2f80ff;
  }
`;

const TagLogo = styled.div`
  position: relative;
  width: 189px;
  height: 114px;
  border-radius: 26px;
  background: rgba(33, 124, 255, 0.95);
  color: #fff;
  font: 600 92px/104px "Noto Sans", sans-serif;
  text-align: center;
`;

const SiteMark = styled.div`
  position: absolute;
  right: 1px;
  bottom: 2px;
  color: rgba(20, 80, 150, 0.3);
  font: 400 21px/26px "Noto Sans CJK SC", sans-serif;
  text-align: right;
  small { display: block; font: 600 16px/20px "Noto Sans", sans-serif; }
`;

const quick = [['newDoc', '新建'], ['open', '打开'], ['save', '保存'], ['print', '打印']];

export default function App() {
  return (
    <Shell>
      <GlobalStyle />
      <TitleBar>
        <Cluster>
          <svg width="24" height="24" viewBox="0 0 24 24" aria-hidden="true">
            <defs><linearGradient id="logo" x1="0" y1="0" x2="1" y2="1"><stop offset="0" stopColor="#4de06a" /><stop offset="1" stopColor="#0a9a9a" /></linearGradient></defs>
            <rect width="24" height="24" rx="5" fill="url(#logo)" />
            <path d="M5.500 17.500v-11l6.500 6 6.500-6v11l-6.500-6z" fill="none" stroke="#fff" strokeWidth="2.400" strokeLinejoin="round" />
          </svg>
          <AppName>亿图脑图MindMaster</AppName>
          <Cluster $gap={9}>
            <QuickButton aria-label="撤销"><Glyph name="undo" size={15} weight={1.5} /><Caret /></QuickButton>
            <QuickButton $dim aria-label="重做"><Glyph name="redo" size={15} weight={1.5} /></QuickButton>
            {quick.map(([icon, label]) => <QuickButton key={icon} aria-label={label}><Glyph name={icon} size={16} weight={1.5} /></QuickButton>)}
            <QuickButton aria-label="导出"><Glyph name="exportDoc" size={15} weight={1.5} /><Caret /></QuickButton>
            <QuickButton aria-label="自定义"><svg width="6" height="8" viewBox="0 0 6 8"><path d="M0 1h6M0 3h6L3 7z" fill="#333" stroke="#333" strokeWidth=".8" /></svg></QuickButton>
          </Cluster>
        </Cluster>
        <Cluster $gap={8}>
          <Promo>
            优惠活动
            <svg width="28" height="24" viewBox="0 0 28 24" aria-hidden="true">
              <path d="M7 10 19 6l5 12-11 5z" fill="#f45cb0" /><path d="M9 9c4-6 7-5 7 1 3-5 9-4 4 1l-9 3z" fill="#5a6cf5" />
              <path d="m3 18 3 3 2-4 4 5M22 17l3 4M18 3l3-1M23 6l3 3" stroke="#ffd84a" strokeWidth="2" fill="none" />
              <path d="m13 12 4 10M4 6l2 2M10 3l1 2" stroke="#ffb0e0" strokeWidth="2" />
            </svg>
          </Promo>
          <VipPill><Glyph name="cart" size={15} weight={1.8} />试用已到期，开通VIP解锁限制。</VipPill>
          <LoginPill><Glyph name="user" size={14} weight={2} />登录</LoginPill>
          <WindowButtons $gap={20}>
            <button aria-label="最小化"><Glyph name="minimise" size={13} weight={1.6} /></button>
            <button aria-label="还原"><Glyph name="restore" size={13} weight={1.6} /></button>
            <button aria-label="关闭"><Glyph name="close" size={13} weight={1.6} /></button>
          </WindowButtons>
        </Cluster>
      </TitleBar>
      <TabRow>
        <Cluster>
          {['文件', '开始', '页面样式', '幻灯片', '高级', '视图'].map(t => <RibbonTab key={t} $active={t === '开始'}>{t}</RibbonTab>)}
        </Cluster>
        <Cluster $gap={17}>
          <LinkButton><Glyph name="send" size={15} />发布</LinkButton>
          <LinkButton><Glyph name="share" size={15} />分享</LinkButton>
          <LinkButton aria-label="帮助"><Glyph name="help" size={17} /><Caret /></LinkButton>
          <LinkButton aria-label="折叠功能区"><Glyph name="up" size={14} /></LinkButton>
        </Cluster>
      </TabRow>

      <Ribbon>
        <Group $first>
          <Tools><ToolButton icon="mindmap" label="思维导图" w={58} active /><ToolButton icon="outline" label="大纲" /></Tools>
          <GroupLabel>模式</GroupLabel>
        </Group>
        <Group>
          <Tools>
            <ToolButton icon="paste" label="粘贴" menu />
            <SmallTools>
              <SmallTool><Glyph name="cut" size={17} />剪切</SmallTool>
              <SmallTool><Glyph name="copy" size={17} />拷贝</SmallTool>
            </SmallTools>
            <ToolButton icon="brush" label="格式刷" />
          </Tools>
          <GroupLabel>剪贴板</GroupLabel>
        </Group>
        <Group>
          <Tools>{topicTools.map(t => <ToolButton key={t.label} {...t} />)}</Tools>
          <GroupLabel>主题</GroupLabel>
        </Group>
        <Group>
          <Tools>
            {relationTools.map(t => <ToolButton key={t.label} {...t} />)}
            <ToolRule />
            {insertTools.map(t => <ToolButton key={t.label} {...t} />)}
          </Tools>
          <GroupLabel>插入</GroupLabel>
        </Group>
        <Group>
          <Tools><ToolButton icon="find" label="查找和替换" w={70} /></Tools>
          <GroupLabel>查找</GroupLabel>
        </Group>
      </Ribbon>

      <DocBar>
        <DocTab>
          <svg width="12" height="14" viewBox="0 0 12 14" aria-hidden="true"><rect x="3" y="1" width="8" height="11" rx="2" fill="#a8efc8" /><rect x="1" y="6" width="7" height="7" rx="1" fill="#2cc183" /><path d="M3 8.500h3v2.500H3z" fill="#fff" /></svg>
          <span>这样读书就够了</span><Dot />
        </DocTab>
        <AddDoc aria-label="新建文档"><Glyph name="plus" size={13} weight={2.4} /></AddDoc>
        <PanelToggle><Glyph name="panel" size={16} />面板</PanelToggle>
      </DocBar>

      <Main>
        <Canvas>
          <MapLayer>
            <Lines width={MAP_W} height={MAP_H} viewBox={`0 ${MAP_TOP} ${MAP_W} ${MAP_H}`}>
              {branches.map(b => <BranchLines key={b.tone} b={b} />)}
            </Lines>
            {branches.map(b => (
              <React.Fragment key={b.tone}>
                {b.title && <NodeText $title $side={b.side} $x={b.side === 'left' ? 628 : 1013} $y={b.y - 25}>{b.title}</NodeText>}
                {b.leaves.map(([text, y]) => (
                  <NodeText key={text} $side={b.side} $x={b.spine + (b.side === 'left' ? -30 : 30)} $y={y - 15}>{text}</NodeText>
                ))}
              </React.Fragment>
            ))}
            <RootTopic><div><span>《这样读书就够了》</span><span>思维导图笔记</span></div></RootTopic>
            <RootMarks width="14" height="28" fill="#fff" stroke={color.red} strokeWidth="1.500" aria-hidden="true">
              <circle cx="7" cy="7" r="5.500" /><path d="M4 7h6" /><rect x="1.500" y="15.500" width="11" height="11" /><path d="M4 21h6M7 18v6" strokeWidth="2" />
            </RootMarks>
            <FloatingToolbar />
            <Cursor width="14" height="22" viewBox="0 0 14 22" aria-hidden="true">
              <path d="M1 1v16.500l4-3.500 2.500 6 3-1.500-2.500-5.500h5z" fill="#fff" stroke="#111" />
            </Cursor>
          </MapLayer>
          <ScrollThumb $vertical />
          <ScrollThumb />
        </Canvas>
        <SidePanel />
      </Main>

      <Palette>
        <span>填充</span>
        {swatches.map((c, i) => <Chip key={i} $tone={`#${c}`} aria-label={`#${c}`} />)}
        <Recent>最近</Recent>
        {['ffe0e0', 'ff4a3a', 'd8dcf8', '4187f5', 'a8dcb0'].map(c => <Chip key={c} $tone={`#${c}`} aria-label={`#${c}`} />)}
        <Wheel />
      </Palette>

      <StatusBar>
        <Cluster>
          <StatusButton $w={48} aria-label="页面视图"><Glyph name="fitBox" size={15} /></StatusButton>
          <StatusRule />
          <PageField>
            <select aria-label="页面" defaultValue="页面-1"><option>页面-1</option></select>
            <Caret size={6} fill="#666" />
          </PageField>
          <StatusRule />
          <StatusButton $w={54} aria-label="添加页面"><Glyph name="plus" size={14} /></StatusButton>
          <StatusRule />
          <StatusButton $w={77} $current>页面-1</StatusButton>
          <StatusRule />
        </Cluster>
        <Cluster $gap={12}>
          <span>[中心主题 101]</span>
          <Glyph name="book" size={16} />
          <Glyph name="grid" size={16} />
          <Glyph name="full" size={16} />
          <Cluster $gap={4}>
            <Glyph name="minimise" size={12} />
            <ZoomSlider type="range" aria-label="缩放" min={0} max={100} defaultValue={20} />
            <Glyph name="plus" size={12} />
          </Cluster>
          <span>75%</span>
          <Caret />
          <ViewButtons $gap={18}><Glyph name="full" size={16} /><Glyph name="grid" size={16} /></ViewButtons>
        </Cluster>
      </StatusBar>

      <Watermark>
        <WatermarkText>电脑技术网<p>www.tagxp.com</p></WatermarkText>
        <TagLogo>TAG<SiteMark>极光下载站<small>www.xz7.com</small></SiteMark></TagLogo>
      </Watermark>
      <ImeBadge>
        CH
        <svg width="12" height="14" viewBox="0 0 12 14" fill="none" stroke="#222" strokeWidth="1.300" aria-hidden="true"><path d="M6 1c5 3 6 9-1 12 2-3 2-5 1-6L1 10" /></svg>
        简
      </ImeBadge>
    </Shell>
  );
}
